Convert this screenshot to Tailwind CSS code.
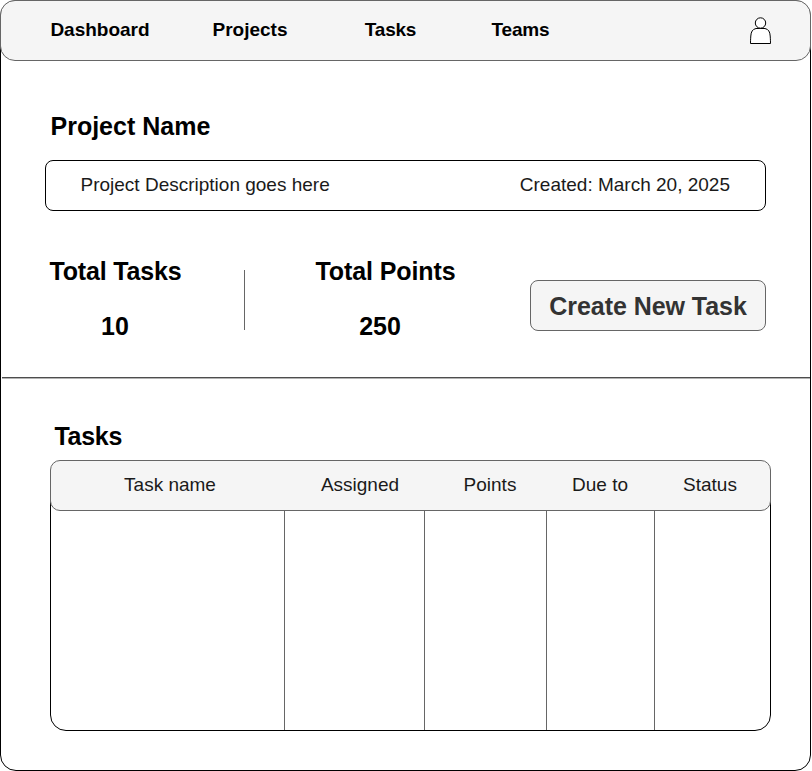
<!DOCTYPE html>
<html lang="en">
<head>
<meta charset="utf-8">
<title>Project</title>
<script src="https://cdn.jsdelivr.net/npm/@tailwindcss/browser@4"></script>
</head>
<body class="bg-white text-black font-['Liberation_Sans',Arial,sans-serif]">
<div class="w-[811px] h-[771px] rounded-[16px] border border-black bg-white">
  <header class="-ml-px -mt-px w-[811px] h-[61px] relative rounded-[15px] border border-[#666] bg-[#f5f5f5] flex items-center justify-between pr-[38px]">
    <nav class="flex text-center text-[19px] leading-[22px] font-bold -mt-[2px] -ml-px">
      <a class="w-[200px]">Dashboard</a>
      <a class="w-[100px]">Projects</a>
      <a class="w-[180px] tracking-[-0.2px] pl-px">Tasks</a>
      <a class="w-[80px] tracking-[-0.2px] pl-px">Teams</a>
    </nav>
    <svg class="w-[23px] h-[29px]" viewBox="0 0 23 29" fill="#fff" stroke="#000">
      <path d="M1.5 27.5C1.5 25.8 1.6 23 1.8 20C2.1 15.8 3.4 13.3 7 12.5H16C19.6 13.3 20.9 15.8 21.2 20C21.4 23 21.5 25.8 21.5 27.5Z"/>
      <circle cx="11.5" cy="7" r="5.2"/>
    </svg>
  </header>
  <section class="pl-[44px] pr-[44px] pt-[50px] h-[316px]">
    <h1 class="pl-[5.5px] text-[25px] leading-[30px] font-bold">Project Name</h1>
    <div class="mt-[19px] w-[721px] h-[51px] border border-black rounded-[8px] pl-[34.5px] pr-[35px] pb-[2px] flex items-center justify-between text-[19px] leading-[22px] text-[#1a1a1a]">
      <span>Project Description goes here</span>
      <span>Created: March 20, 2025</span>
    </div>
    <div class="flex mt-[45px] text-[25px] leading-[30px] font-bold text-center whitespace-nowrap">
      <div class="w-[140px]"><h2 class="tracking-[-0.15px] pl-px">Total Tasks</h2><p class="mt-[25px]">10</p></div>
      <div class="ml-[59px] mt-[14px] w-px h-[60px] bg-[#666]"></div>
      <div class="ml-[60px] w-[160px]"><h2 class="tracking-[-0.08px] pl-px">Total Points</h2><p class="mt-[25px] pr-[10px]">250</p></div>
      <button class="ml-[65px] mt-[24px] w-[236px] h-[51px] rounded-[8px] border border-[#666] bg-[#f5f5f5] text-[#333] tracking-[-0.05px]">Create New Task</button>
    </div>
  </section>
  <div class="ml-px h-[2px] border-t border-t-[#4d4d4d] bg-[#b3b3b3]"></div>
  <section class="pl-[49px] pt-[42px]">
    <h2 class="pl-[4.5px] text-[25px] leading-[30px] font-bold tracking-[-0.3px]">Tasks</h2>
    <div class="mt-[9px] w-[721px] h-[271px] rounded-[16px] border border-black bg-white flex flex-col">
      <div class="-ml-px -mt-px w-[721px] h-[51px] shrink-0 relative rounded-[10px] border border-[#666] bg-[#f5f5f5] flex items-center pb-[2px] text-center text-[19px] leading-[22px] text-[#1a1a1a]">
        <div class="w-[238px]">Task name</div>
        <div class="w-[142px]">Assigned</div>
        <div class="w-[118px]">Points</div>
        <div class="w-[102px]">Due to</div>
        <div class="w-[118px]">Status</div>
      </div>
      <div class="flex grow">
        <div class="w-[234px] border-r border-[#666]"></div>
        <div class="w-[140px] border-r border-[#666]"></div>
        <div class="w-[122px] border-r border-[#666]"></div>
        <div class="w-[108px] border-r border-[#666]"></div>
      </div>
    </div>
  </section>
</div>
</body>
</html>
